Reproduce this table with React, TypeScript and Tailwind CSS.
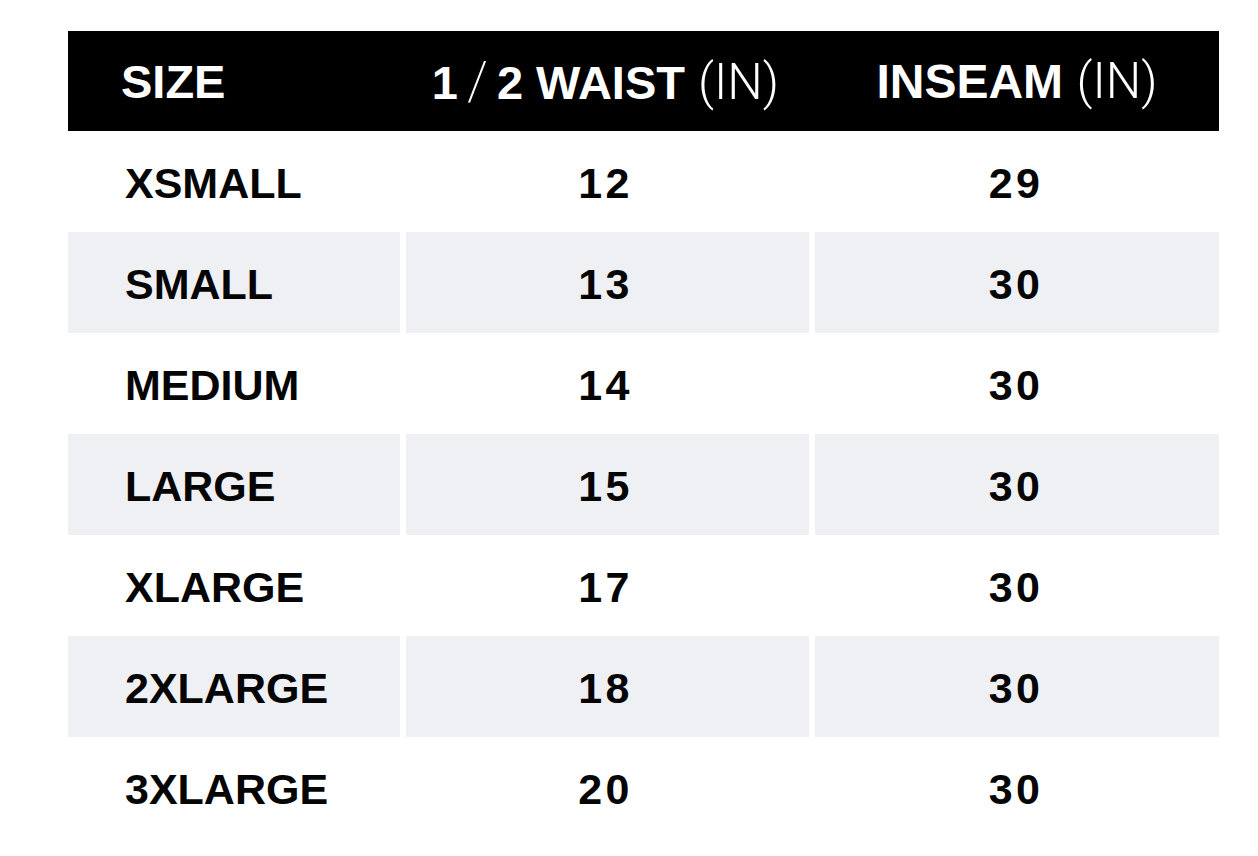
const rows = [
  ["XSMALL", "12", "29"],
  ["SMALL", "13", "30"],
  ["MEDIUM", "14", "30"],
  ["LARGE", "15", "30"],
  ["XLARGE", "17", "30"],
  ["2XLARGE", "18", "30"],
  ["3XLARGE", "20", "30"],
];

const cols = "grid grid-cols-[332px_403px_404px] gap-x-[6px]";

export default function App() {
  return (
    <div className="min-h-screen bg-white pt-[31px] pl-[68px] font-['Liberation_Sans',Arial,sans-serif] text-[#050505]">
      <div className="w-[1151px]">
        <div className={`${cols} h-[100px] items-center bg-black text-white text-[47px] font-bold leading-none`}>
          <div className="pl-[53px]">SIZE</div>
          <div className="text-center pr-[4px] whitespace-nowrap">
            1<span className="font-['Roboto',sans-serif] font-extralight text-[54px] mx-[9px]">/</span>2 WAIST{" "}
            <span className="font-['Roboto',sans-serif] font-light text-[50px]">(IN)</span>
          </div>
          <div className="text-center whitespace-nowrap text-[48px]">
            INSEAM <span className="font-['Roboto',sans-serif] font-light text-[50px]">(IN)</span>
          </div>
        </div>
        {rows.map((r, i) => {
          const bg = i % 2 === 1 ? "bg-[#eff0f4]" : "bg-white";
          return (
            <div key={r[0]} className={`${cols} h-[101px] text-[43px] font-bold leading-none`}>
              <div className={`${bg} flex items-center pl-[57px] pt-[4px]`}>{r[0]}</div>
              <div className={`${bg} flex items-center justify-center pl-[2px] pr-[6px] pt-[4px] tracking-[0.08em]`}>{r[1]}</div>
              <div className={`${bg} flex items-center justify-center pl-[2px] pr-[4px] pt-[4px] tracking-[0.08em]`}>{r[2]}</div>
            </div>
          );
        })}
      </div>
    </div>
  );
}
